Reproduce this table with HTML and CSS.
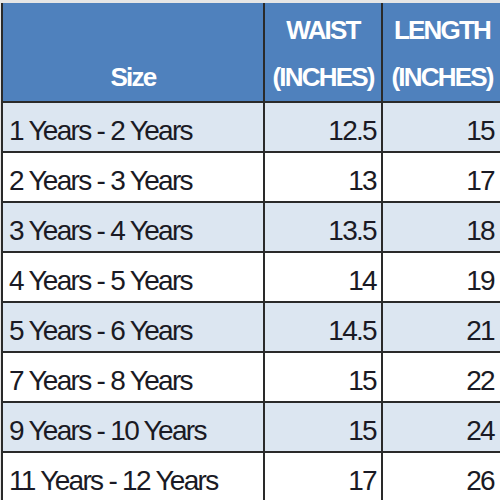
FILE: index.html
```html
<!DOCTYPE html>
<html lang="en">
<head>
  <meta charset="UTF-8" />
  <title>Size Chart</title>
  <link rel="stylesheet" href="styles.css">
</head>
<body>
  <div class="sheet">
    <table class="size-chart">
      <colgroup>
        <col class="col-size">
        <col class="col-waist">
        <col class="col-length">
      </colgroup>
      <thead>
        <tr>
          <th>Size</th>
          <th>WAIST<br>(INCHES)</th>
          <th>LENGTH<br>(INCHES)</th>
        </tr>
      </thead>
      <tbody>
        <tr class="shaded"><td>1 Years - 2 Years</td><td>12.5</td><td>15</td></tr>
        <tr><td>2 Years - 3 Years</td><td>13</td><td>17</td></tr>
        <tr class="shaded"><td>3 Years - 4 Years</td><td>13.5</td><td>18</td></tr>
        <tr><td>4 Years - 5 Years</td><td>14</td><td>19</td></tr>
        <tr class="shaded"><td>5 Years - 6 Years</td><td>14.5</td><td>21</td></tr>
        <tr><td>7 Years - 8 Years</td><td>15</td><td>22</td></tr>
        <tr class="shaded"><td>9 Years - 10 Years</td><td>15</td><td>24</td></tr>
        <tr><td>11 Years - 12 Years</td><td>17</td><td>26</td></tr>
      </tbody>
    </table>
  </div>
</body>
</html>
```

FILE: styles.css
```css
* {
  margin: 0;
  padding: 0;
  box-sizing: border-box;
}

body {
  background-color: #ffffff;
  overflow: hidden;
  width: 500px;
  height: 500px;
}

.sheet {
  background-color: #e6e6e6;
  padding-top: 3px;
  padding-left: 1px;
  width: 500px;
}

.size-chart {
  border-collapse: collapse;
  table-layout: fixed;
  width: 499px;
  font-family: "Liberation Sans", Arial, sans-serif;
  color: #1a1a24;
}

.col-size {
  width: 262px;
}

.col-waist {
  width: 118px;
}

.col-length {
  width: 119px;
}

th,
td {
  border: 2px solid #2a2a2a;
  vertical-align: bottom;
  white-space: nowrap;
}

th {
  background-color: #4f81bd;
  color: #ffffff;
  font-size: 26px;
  font-weight: bold;
  letter-spacing: -1.8px;
  line-height: 47px;
  height: 99px;
  padding-bottom: 0;
  text-align: center;
  border-top: none;
}

.size-chart th:last-child {
  border-right: none;
}

td {
  background-color: #ffffff;
  font-size: 28px;
  letter-spacing: -1.7px;
  line-height: 30px;
  height: 50px;
  padding: 0 5px 5px;
  text-align: right;
}

td:last-child {
  border-right: none;
  padding-right: 7px;
}

td:first-child {
  text-align: left;
  padding-left: 6px;
}

.shaded td {
  background-color: #dce6f1;
}
```
